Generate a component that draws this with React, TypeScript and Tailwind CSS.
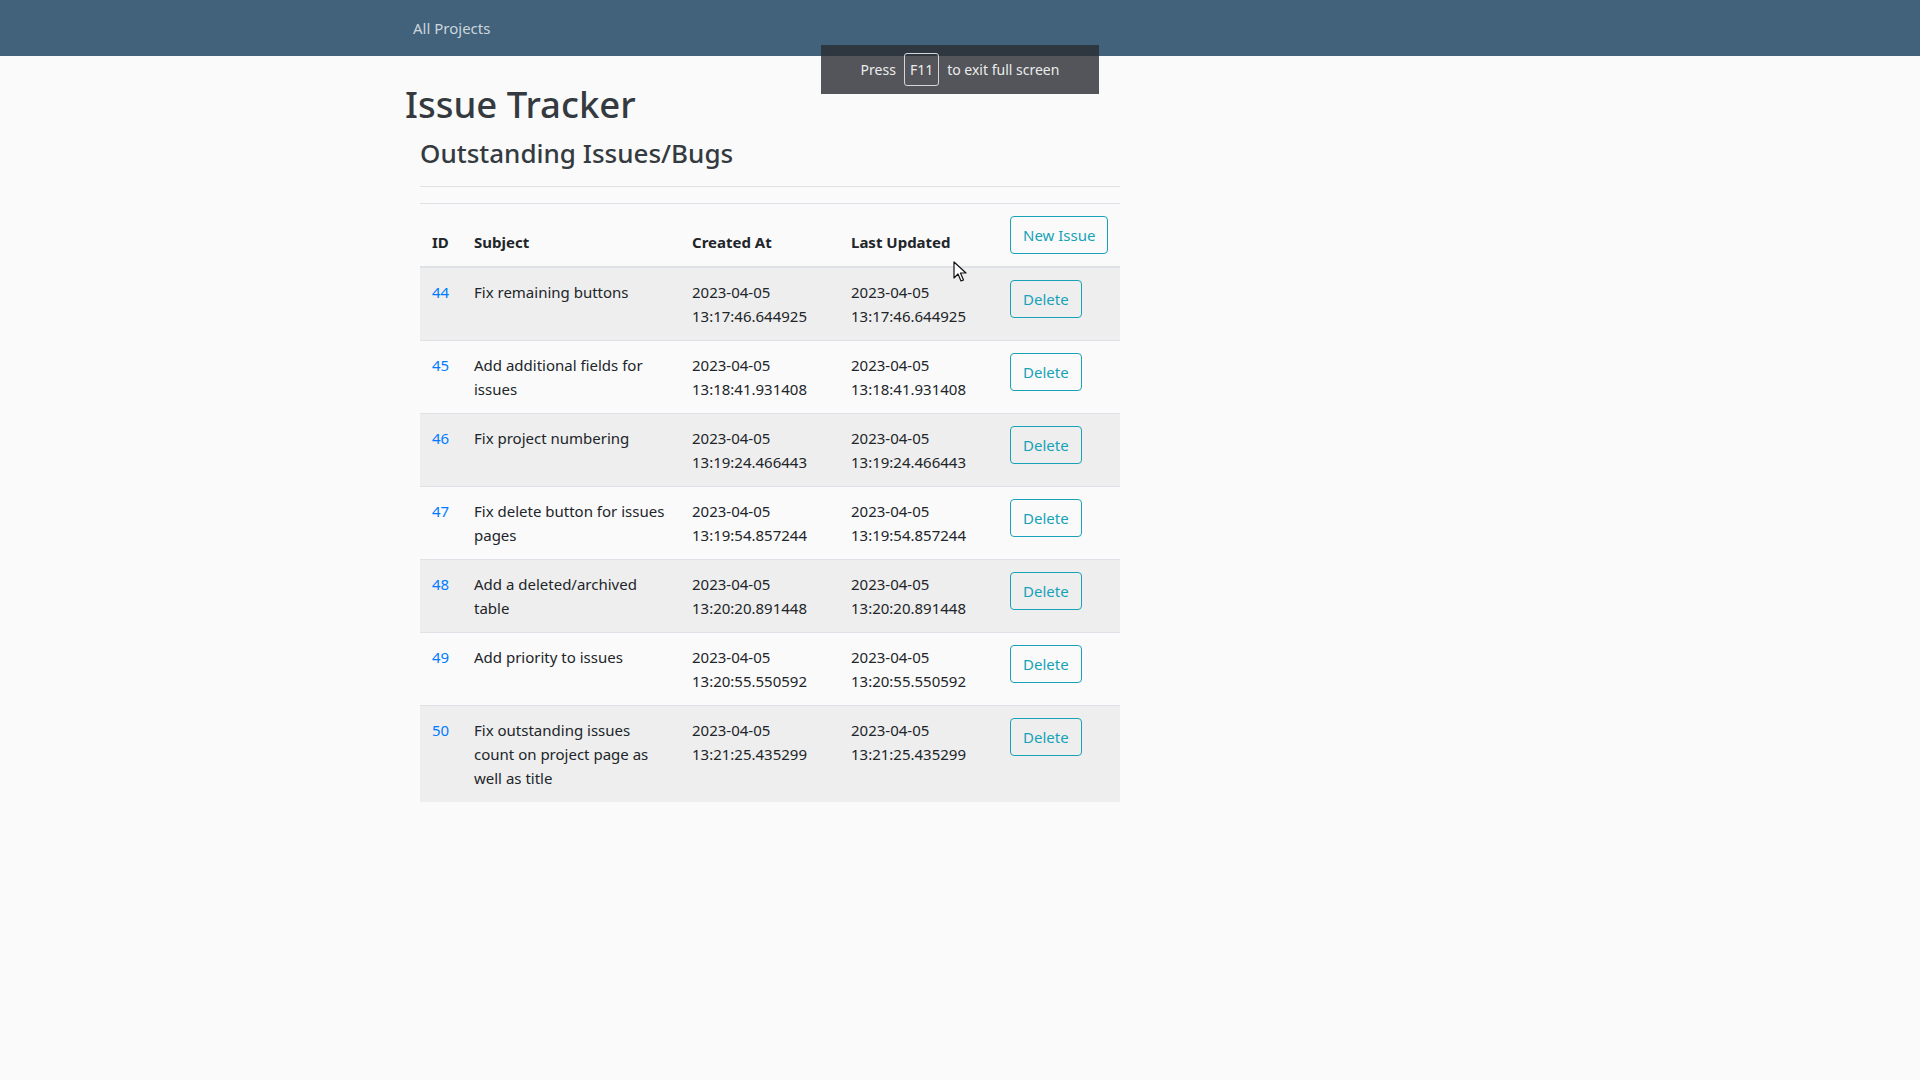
import React from 'react'

interface Issue {
  id: number
  subject: string[]
  created: string
  updated: string
}

const issues: Issue[] = [
  { id: 44, subject: ['Fix remaining buttons'], created: '13:17:46.644925', updated: '13:17:46.644925' },
  { id: 45, subject: ['Add additional fields for', 'issues'], created: '13:18:41.931408', updated: '13:18:41.931408' },
  { id: 46, subject: ['Fix project numbering'], created: '13:19:24.466443', updated: '13:19:24.466443' },
  { id: 47, subject: ['Fix delete button for issues', 'pages'], created: '13:19:54.857244', updated: '13:19:54.857244' },
  { id: 48, subject: ['Add a deleted/archived', 'table'], created: '13:20:20.891448', updated: '13:20:20.891448' },
  { id: 49, subject: ['Add priority to issues'], created: '13:20:55.550592', updated: '13:20:55.550592' },
  { id: 50, subject: ['Fix outstanding issues', 'count on project page as', 'well as title'], created: '13:21:25.435299', updated: '13:21:25.435299' },
]

const font = { fontFamily: '"Segoe UI", "Noto Sans", "Liberation Sans", sans-serif' }

function OutlineButton({ children }: { children: React.ReactNode }) {
  return (
    <button className="px-3 py-[6px] text-[15px] leading-6 font-normal text-[#17a2b8] border border-[#17a2b8] rounded bg-transparent whitespace-nowrap">
      {children}
    </button>
  )
}

export default function App() {
  return (
    <div className="min-h-screen bg-[#fafafa] text-[#212529] relative" style={font}>
      {/* navbar */}
      <nav className="h-14 bg-[#41627a]">
        <div className="w-[1140px] mx-auto px-[15px] h-full flex items-center">
          <a className="px-2 text-[15px] leading-6 text-[#cdd6dd]">All Projects</a>
        </div>
      </nav>

      <div className="w-[1140px] mx-auto px-[15px]">
        <h1 className="mt-[24px] mb-2 text-[36.5px] leading-[48px] font-medium text-[#343a40]">Issue Tracker</h1>

        <div className="w-[700px] ml-[15px]">
          <h3 className="text-[26px] leading-[34px] font-medium text-[#343a40]">Outstanding Issues/Bugs</h3>
          <hr className="mt-4 mb-4 border-0 border-t border-[#e2e2e2]" />

          <table className="w-[700px] table-fixed border-collapse text-[15px] leading-6">
            <colgroup>
              <col className="w-[42px]" />
              <col className="w-[218px]" />
              <col className="w-[159px]" />
              <col className="w-[159px]" />
              <col className="w-[122px]" />
            </colgroup>
            <thead>
              <tr className="border-t border-b-2 border-[#dee2e6]">
                <th className="p-3 text-left align-bottom font-bold">ID</th>
                <th className="p-3 text-left align-bottom font-bold">Subject</th>
                <th className="p-3 text-left align-bottom font-bold">Created At</th>
                <th className="p-3 text-left align-bottom font-bold">Last Updated</th>
                <th className="p-3 text-left align-bottom">
                  <OutlineButton>New Issue</OutlineButton>
                </th>
              </tr>
            </thead>
            <tbody>
              {issues.map((issue, i) => (
                <tr key={issue.id} className={`border-t border-[#dee2e6] ${i % 2 === 0 ? 'bg-[#eeeeee]' : ''}`}>
                  <td className="p-3 align-top">
                    <a className="text-[#007bff]">{issue.id}</a>
                  </td>
                  <td className="p-3 align-top">
                    {issue.subject.map(line => (
                      <div key={line} className="whitespace-nowrap">{line}</div>
                    ))}
                  </td>
                  <td className="p-3 align-top">
                    <div>2023-04-05</div>
                    <div>{issue.created}</div>
                  </td>
                  <td className="p-3 align-top">
                    <div>2023-04-05</div>
                    <div>{issue.updated}</div>
                  </td>
                  <td className="p-3 align-top">
                    <OutlineButton>Delete</OutlineButton>
                  </td>
                </tr>
              ))}
            </tbody>
          </table>
        </div>
      </div>

      {/* browser full screen notice */}
      <div className="absolute left-[821px] top-[45px] w-[278px] h-[49px] bg-[rgba(41,44,50,0.8)] flex items-center justify-center gap-2 text-[14px] text-[#ececec]">
        <span>Press</span>
        <span className="h-[33px] px-[5px] flex items-center border border-[#d6d6d6] rounded-[3px]">F11</span>
        <span>to exit full screen</span>
      </div>

      {/* mouse cursor */}
      <svg className="absolute left-[953px] top-[261px]" width="14" height="22" viewBox="0 0 14 22">
        <path d="M1 1 L1 17 L5 13 L8 20 L10.5 19 L7.5 12 L13 12 Z" fill="#fff" stroke="#111" strokeWidth="1.2" strokeLinejoin="round" />
      </svg>
    </div>
  )
}
